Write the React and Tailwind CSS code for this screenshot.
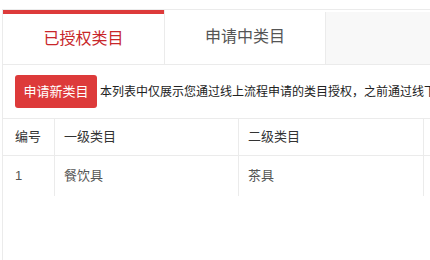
import React from 'react';

const rows = [{ id: 1, first: '餐饮具', second: '茶具' }];

export default function App() {
  return (
    <div
      className="w-[430px] h-[260px] overflow-hidden bg-white pt-[9px] pl-[2px]"
      style={{ fontFamily: '"Liberation Sans", "Noto Sans CJK SC", sans-serif' }}
    >
      <div className="h-full border-l border-t border-[#ebebeb]">
        {/* tabs */}
        <div className="flex h-[55px] border-b border-[#ebebeb]">
          <div className="w-[161px] shrink-0 border-t-4 border-[#dd3a3a] flex items-center justify-center text-[16px] text-[#c8262a]">
            已授权类目
          </div>
          <div className="w-[161px] shrink-0 border-l border-[#ebebeb] flex items-center justify-center text-[16px] text-[#555]">
            申请中类目
          </div>
          <div className="flex-1 mt-[2px] border-l border-[#ebebeb] bg-[#f8f8f8]" />
        </div>

        {/* toolbar */}
        <div className="flex items-center pt-[10px] pb-[10px] pl-[12px] whitespace-nowrap">
          <button className="h-[33px] w-[82px] shrink-0 rounded-[3px] bg-[#dd3a3a] text-white text-[13px]">
            申请新类目
          </button>
          <span className="ml-[3px] text-[12px] text-[#222]">
            本列表中仅展示您通过线上流程申请的类目授权，之前通过线下流程申请的类目授权请联系对接人查询
          </span>
        </div>

        {/* table */}
        <div className="border-t border-[#ebebeb] text-[13px]">
          <div className="flex h-[37px] border-b border-[#ebebeb] text-[#333]">
            <div className="w-[51px] shrink-0 flex items-center pl-[12px]">编号</div>
            <div className="w-[184px] shrink-0 border-l border-[#ebebeb] flex items-center pl-[9px]">一级类目</div>
            <div className="w-[185px] shrink-0 border-l border-[#ebebeb] flex items-center pl-[9px]">二级类目</div>
            <div className="flex-1 border-l border-[#ebebeb]" />
          </div>
          {rows.map((r) => (
            <div key={r.id} className="flex h-[40px] text-[#555]">
              <div className="w-[51px] shrink-0 flex items-center pl-[12px]">{r.id}</div>
              <div className="w-[184px] shrink-0 border-l border-[#ebebeb] flex items-center pl-[9px]">{r.first}</div>
              <div className="w-[185px] shrink-0 border-l border-[#ebebeb] flex items-center pl-[9px]">{r.second}</div>
              <div className="flex-1 border-l border-[#ebebeb]" />
            </div>
          ))}
        </div>
      </div>
    </div>
  );
}
